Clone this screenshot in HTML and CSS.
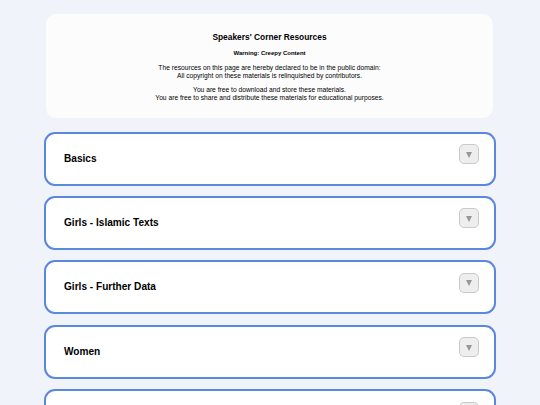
FILE: index.html
```html
<!DOCTYPE html>
<html lang="en">
<head>
<meta charset="utf-8">
<title>Speakers' Corner Resources</title>
<link rel="stylesheet" href="styles.css">
</head>
<body>
<div class="page">
  <header class="intro">
    <h1 class="intro-title">Speakers' Corner Resources</h1>
    <div class="warning">Warning: Creepy Content</div>
    <p class="intro-text">The resources on this page are hereby declared to be in the public domain:<br>All copyright on these materials is relinquished by contributors.</p>
    <p class="intro-text">You are free to download and store these materials.<br>You are free to share and distribute these materials for educational purposes.</p>
  </header>
  <section class="sections">
    <div class="card"><h2 class="card-title">Basics</h2><button class="toggle" aria-label="Expand"><span class="tri"></span></button></div>
    <div class="card"><h2 class="card-title">Girls - Islamic Texts</h2><button class="toggle" aria-label="Expand"><span class="tri"></span></button></div>
    <div class="card"><h2 class="card-title">Girls - Further Data</h2><button class="toggle" aria-label="Expand"><span class="tri"></span></button></div>
    <div class="card"><h2 class="card-title">Women</h2><button class="toggle" aria-label="Expand"><span class="tri"></span></button></div>
    <div class="card"><h2 class="card-title">Men</h2><button class="toggle" aria-label="Expand"><span class="tri"></span></button></div>
  </section>
</div>
</body>
</html>
```
FILE: styles.css
```css
html, body {
  margin: 0;
  padding: 0;
  background: #f0f3f9;
  font-family: "Liberation Sans", Arial, sans-serif;
  color: #000;
}
.page {
  width: 452px;
  margin: 0 auto;
  padding-top: 14px;
}
.intro {
  margin: 0 3px 0 2px;
  background: #fcfcfd;
  border-radius: 10px;
  padding: 18.5px 10px 16.5px;
  text-align: center;
}
.intro-title {
  font-size: 8.4px;
  line-height: 9px;
  font-weight: bold;
  margin: 0;
}
.warning {
  font-size: 6px;
  line-height: 7px;
  font-weight: bold;
  margin-top: 8.5px;
}
.intro-text {
  font-size: 6.7px;
  line-height: 8px;
  margin: 6.5px 0 0;
}
.intro-text + .intro-text {
  margin-top: 6px;
}
.sections {
  margin-top: 13.5px;
  display: flex;
  flex-direction: column;
  gap: 10.4px;
}
.card {
  box-sizing: border-box;
  height: 54px;
  background: #fff;
  border: 2px solid #5b87dd;
  border-radius: 11px;
  padding: 10.5px 15px 0 18px;
  display: flex;
  justify-content: space-between;
  align-items: flex-start;
}
.card-title {
  margin: 8.5px 0 0;
  font-size: 10.1px;
  line-height: 12px;
  font-weight: bold;
}
.toggle {
  box-sizing: border-box;
  width: 20.5px;
  height: 20px;
  padding: 0;
  background: #eeeeee;
  border: 1px solid #c9c9c9;
  border-radius: 5px;
  display: flex;
  align-items: center;
  justify-content: center;
}
.tri {
  width: 0;
  height: 0;
  border-left: 3px solid transparent;
  border-right: 3px solid transparent;
  border-top: 6px solid #979797;
  margin-top: 1px;
}
```
